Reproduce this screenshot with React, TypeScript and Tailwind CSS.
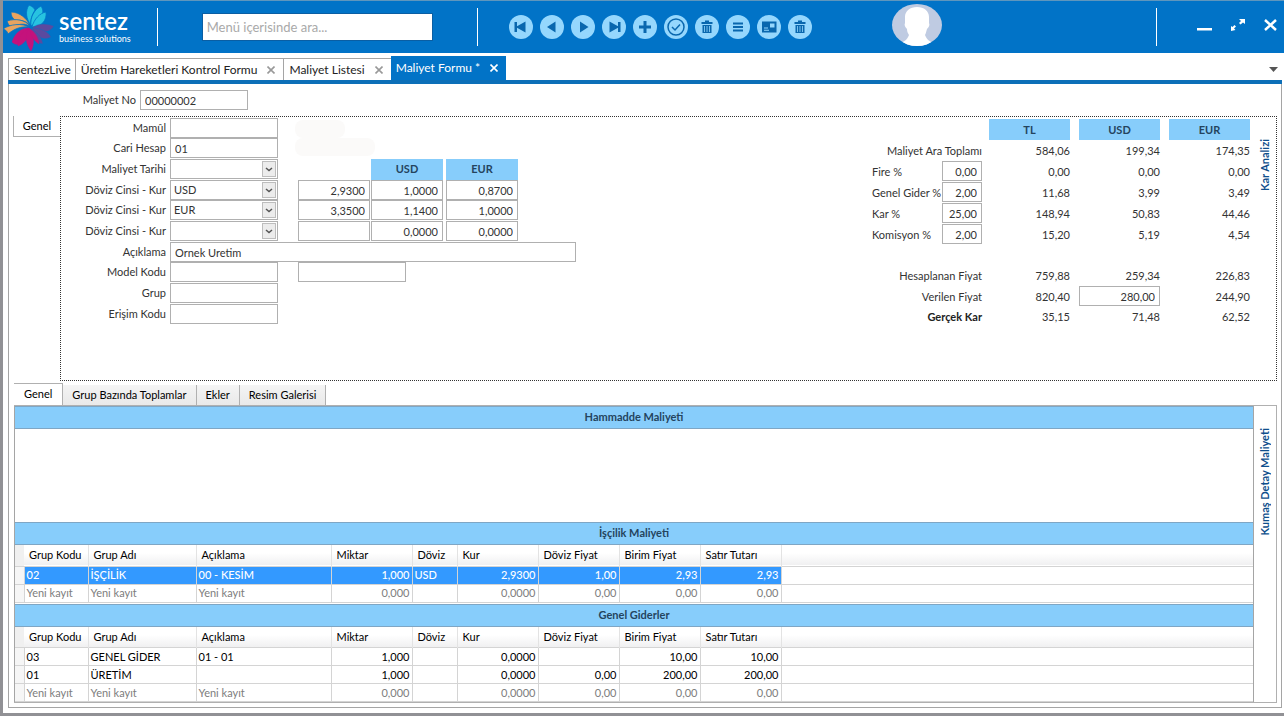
import type { ReactNode } from "react";
import clsx from "clsx";

type Tab = { title: string; closable: boolean; active?: boolean };

const tabs: Tab[] = [
  { title: "SentezLive", closable: false },
  { title: "Üretim Hareketleri Kontrol Formu", closable: true },
  { title: "Maliyet Listesi", closable: true },
  { title: "Maliyet Formu *", closable: true, active: true },
];

const columns = [
  "Grup Kodu",
  "Grup Adı",
  "Açıklama",
  "Miktar",
  "Döviz",
  "Kur",
  "Döviz Fiyat",
  "Birim Fiyat",
  "Satır Tutarı",
];

const newRow = ["Yeni kayıt", "Yeni kayıt", "Yeni kayıt", "0,000", "", "0,0000", "0,00", "0,00", "0,00"];

const laborRows = [["02", "İŞÇİLİK", "00 - KESİM", "1,000", "USD", "2,9300", "1,00", "2,93", "2,93"]];

const expenseRows = [
  ["03", "GENEL GİDER", "01 - 01", "1,000", "", "0,0000", "", "10,00", "10,00"],
  ["01", "ÜRETİM", "", "1,000", "", "0,0000", "0,00", "200,00", "200,00"],
];

const toolbar: { label: string; icon: ReactNode }[] = [
  { label: "İlk kayıt", icon: <path d="M5.500 7h2.500v4.200l8.500-4.700v11l-8.500-4.700v4.200h-2.500z" /> },
  { label: "Önceki kayıt", icon: <path d="M7 12l8.500-5.500v11z" /> },
  { label: "Sonraki kayıt", icon: <path d="M17.500 12l-8.500-5.500v11z" /> },
  { label: "Son kayıt", icon: <path d="M18.500 7h-2.500v4.200l-8.500-4.700v11l8.500-4.700v4.200h2.500z" /> },
  { label: "Yeni", icon: <path d="M10.500 6h3v4.500h4.500v3h-4.500v4.500h-3v-4.500h-4.500v-3h4.500z" /> },
  {
    label: "Kaydet",
    icon: (
      <g fill="none" stroke="currentColor" strokeWidth="1.500">
        <circle cx="12" cy="12" r="8" />
        <path d="M8 12l3 3 5-5.500" />
      </g>
    ),
  },
  { label: "Sil", icon: <TrashShape /> },
  { label: "Liste", icon: <path d="M7 7.500h10v2h-10zM7 11h10v2h-10zM7 14.500h10v2h-10z" /> },
  {
    label: "Kart",
    icon: (
      <path
        fillRule="evenodd"
        d="M5 6.500h14.500v11h-14.500zM13 8.500v4h4.500v-4zM7 12.500v1h4v-1zM7 14.700v1h5v-1z"
      />
    ),
  },
  { label: "Temizle", icon: <TrashShape /> },
];

function TrashShape() {
  return (
    <path
      fillRule="evenodd"
      d="M10 5.500h4v1.500h3.500v2h-11v-2h3.500zM7.500 10h9v8h-9zM9.200 11v6h.8v-6zM11.600 11v6h.8v-6zM14 11v6h.8v-6z"
    />
  );
}

function Logo() {
  return (
    <div className="flex items-center gap-1">
      <svg viewBox="0 0 52 48" className="h-12 w-[52px]" aria-hidden="true">
        <g fill="#e9a45f" stroke="#0173c7" strokeWidth=".8">
          <path d="M27 22C24 16 17 9 8 9 8 12 9 15 12 17 18 17 23 18 27 22z" />
          <path d="M27 23C22 17 13 15 4 18 5 21 6 23 9 24 15 21 21 20 27 23z" />
          <path d="M26 24C19 20 7 21 0 26 3 27 4 28 5 31 11 26 18 23 26 24z" />
        </g>
        <g fill="#27c3e0" stroke="#0173c7" strokeWidth=".8">
          <path d="M28 22C23 16 22 8 26 2 30 4 31 5 32 7 29 12 27 17 28 22z" />
          <path d="M28 23C27 14 31 7 38 3 42 9 40 17 28 23z" />
          <path d="M29 24C31 16 37 10 43 9 44 17 39 24 29 24z" />
        </g>
        <g fill="#5b4a9f" stroke="#0173c7" strokeWidth=".4">
          <path d="M29 25C35 20 43 20 51 23 47 30 38 31 29 25z" />
          <path d="M29 25C37 25 45 28 48 34 41 38 34 35 29 25z" />
          <path d="M28 25C35 30 39 35 40 41 33 40 29 34 28 25z" />
        </g>
        <g fill="#c4127c" stroke="#c4127c" strokeWidth=".4">
          <path d="M26 25C18 25 12 30 9 39 11 41 14 42 16 41 18 34 22 30 26 25z" />
          <path d="M26 25C18 30 14 36 15 43 22 41 26 34 26 25z" />
          <path d="M26 25C21 33 23 41 28 48 32 41 31 33 26 25z" />
          <path d="M26 25C28 33 30 37 36 41 35 33 31 29 26 25z" />
        </g>
      </svg>
      <div className="flex flex-col font-['Lato',sans-serif] text-white">
        <span className="text-2xl leading-6 font-semibold">sentez</span>
        <span className="text-[9px] leading-3">business solutions</span>
      </div>
    </div>
  );
}

function Avatar() {
  return (
    <svg viewBox="0 0 50 42" className="mb-1 ml-20 h-[42px] w-[50px]" role="img" aria-label="Kullanıcı">
      <defs>
        <clipPath id="avatar-clip">
          <ellipse cx="25" cy="21" rx="25" ry="21" />
        </clipPath>
      </defs>
      <g clipPath="url(#avatar-clip)">
        <rect width="50" height="42" fill="#bfcbe2" />
        <path
          fill="#fff"
          d="M25 3C32 3 37 7 37 13L37 19C38 21 37 23 35 25 34 28 34 29 33 31 35 36 38 38 42 39L42 42H8V39C12 38 15 36 17 31 16 29 15 28 15 25 13 23 12 21 13 19L13 13C13 7 18 3 25 3z"
        />
      </g>
    </svg>
  );
}

function Header() {
  return (
    <header className="flex h-[53px] items-center border-t border-[#5f96bd] bg-[#0173c7]">
      <Logo />
      <div className="ml-[26px] h-[38px] w-px bg-white" />
      <input
        type="text"
        aria-label="Menü araması"
        placeholder="Menü içerisinde ara..."
        className="ml-11 h-7 w-[231px] border border-[#0a5ea3] bg-white px-1 text-[13px] placeholder:text-[#a9a9a9]"
      />
      <div className="ml-11 h-[38px] w-px bg-white" />
      <div className="ml-[31px] flex gap-[7px]">
        {toolbar.map((item) => (
          <button
            key={item.label}
            type="button"
            aria-label={item.label}
            className="size-6 rounded-full bg-[#95d7fd] text-[#0967ae]"
          >
            <svg viewBox="0 0 24 24" className="size-6" fill="currentColor">
              {item.icon}
            </svg>
          </button>
        ))}
      </div>
      <Avatar />
      <div className="mr-10 ml-auto h-[38px] w-px bg-white" />
      <div className="flex items-center gap-[19px] pr-[7px] pb-1 text-white">
        <button type="button" aria-label="Küçült">
          <svg viewBox="0 0 15 12" className="h-3 w-[15px]" fill="currentColor">
            <path d="M0 9h15v2.500h-15z" />
          </svg>
        </button>
        <button type="button" aria-label="Geri yükle">
          <svg viewBox="0 0 14 12" className="h-3 w-3.5" fill="currentColor">
            <path d="M8 0h6v5l-2-1.500-2.500 2-1.500-1.500 2-2zM0 7l1.500 1 2-2 1.500 1.500-2 2 1.500 1.500-4.500 1z" />
          </svg>
        </button>
        <button type="button" aria-label="Kapat">
          <svg viewBox="0 0 13 12" className="h-3 w-[13px]" fill="none" stroke="currentColor" strokeWidth="2.500">
            <path d="M1 1l11 10M12 1l-11 10" />
          </svg>
        </button>
      </div>
    </header>
  );
}

function TabBar() {
  return (
    <nav className="mr-0.5 ml-[5px] flex h-[31px] items-end border-b-4 border-[#0d6fb8] text-xs text-[#222]">
      {tabs.map((tab) => (
        <div
          key={tab.title}
          className={clsx(
            "flex items-center",
            tab.active ? "h-6 bg-[#0173c7] text-white" : "h-[22px] border-t border-l border-[#a5a5a5]",
          )}
        >
          <button type="button" className={clsx("pl-[5px]", tab.closable ? "pr-2.5" : "pr-1")}>
            {tab.title}
          </button>
          {tab.closable && (
            <button
              type="button"
              aria-label={`${tab.title} kapat`}
              className={clsx("pr-2", tab.active ? "text-white" : "text-[#999]")}
            >
              <svg viewBox="0 0 8 8" className="size-2" fill="none" stroke="currentColor" strokeWidth="1.600">
                <path d="M.5.5l7 7M7.500.5l-7 7" />
              </svg>
            </button>
          )}
        </div>
      ))}
      <button type="button" aria-label="Sekmeler" className="mr-1 mb-2 ml-auto">
        <svg viewBox="0 0 9 5" className="h-[5px] w-[9px]" fill="#555">
          <path d="M0 0h9l-4.500 5z" />
        </svg>
      </button>
    </nav>
  );
}

type FieldProps = { label: string; id: string; children?: ReactNode };

function Field({ label, id, children }: FieldProps) {
  return (
    <div className="flex items-start">
      <label htmlFor={id} className="w-[109px] pr-1 text-right leading-5 whitespace-nowrap">
        {label}
      </label>
      {children}
    </div>
  );
}

type TextBoxProps = { id?: string; label?: string; value?: string; className?: string };

function TextBox({ id, label, value = "", className }: TextBoxProps) {
  return (
    <input
      id={id}
      type="text"
      aria-label={label}
      defaultValue={value}
      className={clsx("h-5 border border-[#b0b0b0] bg-white px-1", className)}
    />
  );
}

function SelectBox({ id, value = "" }: { id: string; value?: string }) {
  return (
    <div className="relative">
      <select
        id={id}
        defaultValue={value}
        className="h-5 w-[108px] appearance-none border border-[#b0b0b0] bg-white px-[3px]"
      >
        <option value={value}>{value}</option>
      </select>
      <span className="pointer-events-none absolute top-0.5 right-0.5 flex h-4 w-3.5 items-center justify-center border border-[#bdbdbd] bg-[#ececec]">
        <svg viewBox="0 0 8 5" className="h-[5px] w-2" fill="none" stroke="#555" strokeWidth="1.500">
          <path d="M1 1l3 2.500 3-2.500" />
        </svg>
      </span>
    </div>
  );
}

type RateRowProps = { id: string; currency?: string; rate?: string; usd: string; eur: string };

function RateRow({ id, currency, rate, usd, eur }: RateRowProps) {
  return (
    <Field label="Döviz Cinsi - Kur" id={id}>
      <SelectBox id={id} value={currency} />
      <TextBox label="Kur" value={rate} className="ml-5 w-[72px] text-right" />
      <TextBox label="USD kuru" value={usd} className="ml-px w-[72px] text-right" />
      <TextBox label="EUR kuru" value={eur} className="ml-[3px] w-[72px] text-right" />
    </Field>
  );
}

function CostFields() {
  return (
    <div className="grid grid-rows-[20px_21px_21px_20px_21px_21px_20px_21px_21px_20px] pt-px">
      <Field label="Mamûl" id="mamul">
        <TextBox id="mamul" className="w-[108px]" />
        <span className="mt-0.5 ml-[17px] h-[18px] w-[50px] rounded-lg bg-[#fbfaf9]" />
      </Field>
      <Field label="Cari Hesap" id="cari">
        <TextBox id="cari" value="01" className="w-[108px]" />
        <span className="ml-[17px] h-[18px] w-20 rounded-lg bg-[#fbfaf9]" />
      </Field>
      <Field label="Maliyet Tarihi" id="tarih">
        <SelectBox id="tarih" />
        <span className="ml-[93px] h-[21px] w-[72px] bg-[#87cdfb] text-center leading-5 font-bold text-[#24445e]">
          USD
        </span>
        <span className="ml-[3px] h-[21px] w-[72px] bg-[#87cdfb] text-center leading-5 font-bold text-[#24445e]">
          EUR
        </span>
      </Field>
      <RateRow id="doviz-1" currency="USD" rate="2,9300" usd="1,0000" eur="0,8700" />
      <RateRow id="doviz-2" currency="EUR" rate="3,3500" usd="1,1400" eur="1,0000" />
      <RateRow id="doviz-3" usd="0,0000" eur="0,0000" />
      <Field label="Açıklama" id="aciklama">
        <TextBox id="aciklama" value="Ornek Uretim" className="w-[406px]" />
      </Field>
      <Field label="Model Kodu" id="model">
        <TextBox id="model" className="w-[108px]" />
        <TextBox label="Model adı" className="ml-5 w-[108px]" />
      </Field>
      <Field label="Grup" id="grup">
        <TextBox id="grup" className="w-[108px]" />
      </Field>
      <Field label="Erişim Kodu" id="erisim">
        <TextBox id="erisim" className="w-[108px]" />
      </Field>
    </div>
  );
}

type AnalysisRowProps = {
  label: string;
  id?: string;
  percent?: string;
  values: string[];
  editable?: boolean;
  bold?: boolean;
};

function AnalysisRow({ label, id, percent, values, editable, bold }: AnalysisRowProps) {
  return (
    <div className="flex gap-[7px] leading-[21px]">
      {percent ? (
        <div className="flex w-[110px] justify-between">
          <label htmlFor={id} className="whitespace-nowrap">
            {label}
          </label>
          <TextBox id={id} value={percent} className="w-10 text-right" />
        </div>
      ) : (
        <div className={clsx("w-[110px] text-right whitespace-nowrap", bold && "font-bold text-[#222]")}>{label}</div>
      )}
      <div className="flex gap-[9px]">
        {values.map((value, i) =>
          editable && i === 1 ? (
            <TextBox key={i} label={label} value={value} className="w-[81px] text-right" />
          ) : (
            <span key={i} className="w-[81px] text-right">
              {value}
            </span>
          ),
        )}
      </div>
    </div>
  );
}

function ProfitAnalysis() {
  return (
    <div className="mr-1 ml-auto grid grid-rows-[21px_21px_21px_21px_21px_20px_21px_21px_20px_21px] pt-0.5">
      <div className="flex justify-end gap-[9px]">
        {["TL", "USD", "EUR"].map((name) => (
          <span key={name} className="w-[81px] bg-[#87cdfb] text-center leading-[21px] font-bold text-[#24445e]">
            {name}
          </span>
        ))}
      </div>
      <AnalysisRow label="Maliyet Ara Toplamı" values={["584,06", "199,34", "174,35"]} />
      <AnalysisRow label="Fire %" id="fire" percent="0,00" values={["0,00", "0,00", "0,00"]} />
      <AnalysisRow label="Genel Gider %" id="gider" percent="2,00" values={["11,68", "3,99", "3,49"]} />
      <AnalysisRow label="Kar %" id="kar" percent="25,00" values={["148,94", "50,83", "44,46"]} />
      <AnalysisRow label="Komisyon %" id="komisyon" percent="2,00" values={["15,20", "5,19", "4,54"]} />
      <div />
      <AnalysisRow label="Hesaplanan Fiyat" values={["759,88", "259,34", "226,83"]} />
      <AnalysisRow label="Verilen Fiyat" values={["820,40", "280,00", "244,90"]} editable />
      <AnalysisRow label="Gerçek Kar" values={["35,15", "71,48", "62,52"]} bold />
    </div>
  );
}

function SideTab({ children }: { children: ReactNode }) {
  return (
    <div className="flex w-[22px] shrink-0 justify-center pt-[22px]">
      <button
        type="button"
        className="h-fit rotate-180 leading-4 font-bold whitespace-nowrap text-[#0f4f8c] [writing-mode:vertical-rl]"
      >
        {children}
      </button>
    </div>
  );
}

function SectionTitle({ children }: { children: ReactNode }) {
  return (
    <h2 className="h-[23px] border-y border-[#7fa6c4] bg-[#87cdfb] text-center leading-5 font-bold text-[#24445e]">
      {children}
    </h2>
  );
}

function isNumeric(column: number) {
  return column === 3 || column > 4;
}

function CostTable({ rows, selected }: { rows: string[][]; selected?: number }) {
  return (
    <table className="w-full table-fixed border-collapse text-black">
      <colgroup>
        <col className="w-[9px]" />
        <col className="w-16" />
        <col className="w-[108px]" />
        <col className="w-[135px]" />
        <col className="w-[81px]" />
        <col className="w-[45px]" />
        <col className="w-[81px]" />
        <col className="w-[81px]" />
        <col className="w-[81px]" />
        <col className="w-[81px]" />
        <col />
      </colgroup>
      <thead>
        <tr className="h-[21px] border-b border-[#d4d4d4] bg-linear-to-b from-white from-40% to-[#f0f0f1] leading-5">
          <th className="bg-[#f0f0f0]" />
          {columns.map((column) => (
            <th key={column} className="border-r border-[#e3e3e3] pl-[5px] text-left font-normal whitespace-nowrap">
              {column}
            </th>
          ))}
          <th />
        </tr>
      </thead>
      <tbody>
        {[...rows, newRow].map((row, index) => (
          <tr
            key={index}
            className={clsx("h-[18px] border-b border-[#d4d4d4] leading-4", index === rows.length && "text-[#7d7d7d]")}
          >
            <td className="border-r border-[#d4d4d4] bg-[#f6f6f6]" />
            {row.map((cell, column) => (
              <td
                key={column}
                className={clsx(
                  "border-r border-[#d4d4d4] whitespace-nowrap",
                  isNumeric(column) ? "pr-0.5 text-right" : "pl-0.5",
                  index === selected && "bg-[#3399ff] font-medium text-white",
                )}
              >
                {cell}
              </td>
            ))}
            <td />
          </tr>
        ))}
      </tbody>
    </table>
  );
}

function DetailTabs() {
  return (
    <div className="flex items-end text-black">
      <button type="button" className="h-[22px] border-t border-r border-[#b0b0b0] bg-white px-2.5">
        Genel
      </button>
      {["Grup Bazında Toplamlar", "Ekler", "Resim Galerisi"].map((title) => (
        <button
          key={title}
          type="button"
          className="h-5 border-r border-[#b0b0b0] bg-linear-to-b from-[#f4f4f4] to-[#e9e9e9] px-[9px]"
        >
          {title}
        </button>
      ))}
    </div>
  );
}

export default function App() {
  return (
    <div className="flex min-h-screen flex-col border-b-[3px] border-l-[3px] border-[#919195] bg-white font-['Lato','Open_Sans',sans-serif] text-[11px] text-[#333]">
      <Header />
      <TabBar />
      <main className="mr-0.5 mb-[5px] ml-[5px] flex grow flex-col border border-t-0 border-[#a5a5a5] pr-1 pb-1 pl-1">
        <div className="flex py-1.5">
          <label htmlFor="maliyet-no" className="w-[127px] pr-1 text-right leading-5">
            Maliyet No
          </label>
          <TextBox id="maliyet-no" value="00000002" className="w-[108px]" />
        </div>

        <div className="flex items-start">
          <button type="button" className="h-[21px] w-[47px] border-b border-l border-[#b0b0b0] text-black">
            Genel
          </button>
          <section className="flex h-[265px] grow border border-dotted border-[#333]">
            <CostFields />
            <ProfitAnalysis />
            <SideTab>Kar Analizi</SideTab>
          </section>
        </div>

        <div className="mt-0.5 ml-px flex grow flex-col">
          <DetailTabs />
          <section className="flex grow border-t border-r border-b border-[#b0b0b0]">
            <div className="flex grow flex-col border-r border-l border-[#a5a5a5]">
              <SectionTitle>Hammadde Maliyeti</SectionTitle>
              <div className="min-h-20 grow" />
              <SectionTitle>İşçilik Maliyeti</SectionTitle>
              <CostTable rows={laborRows} selected={0} />
              <div className="h-px" />
              <SectionTitle>Genel Giderler</SectionTitle>
              <CostTable rows={expenseRows} />
            </div>
            <SideTab>Kumaş Detay Maliyeti</SideTab>
          </section>
        </div>
      </main>
    </div>
  );
}
